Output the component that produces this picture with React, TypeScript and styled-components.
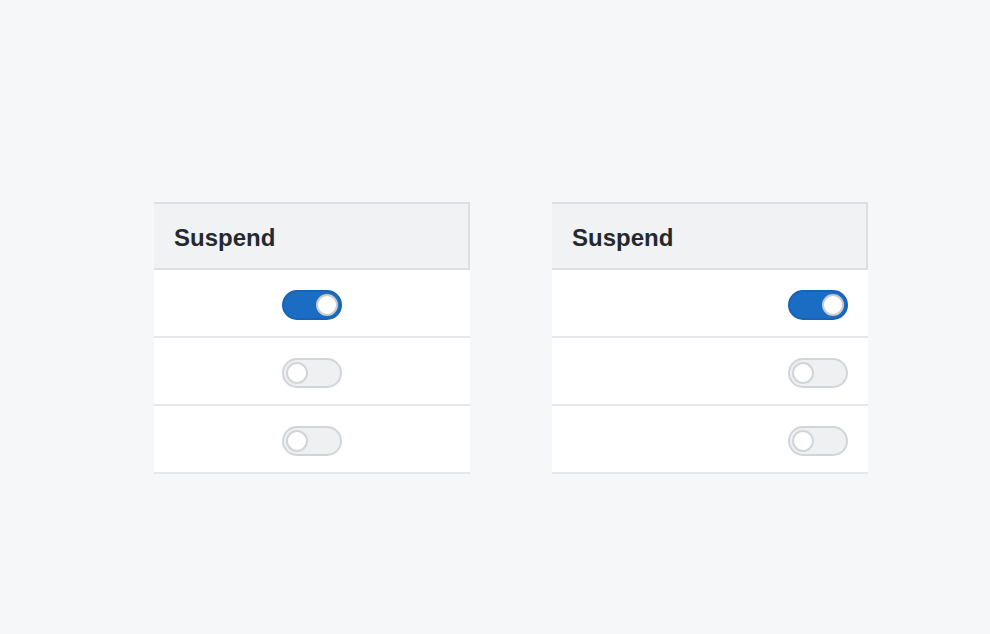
import React from 'react';
import styled, { createGlobalStyle } from 'styled-components';

const GlobalStyle = createGlobalStyle`
  html, body {
    margin: 0;
    padding: 0;
    background: #f6f7f9;
    font-family: 'Liberation Sans', Arial, sans-serif;
  }
`;

const Page = styled.div`
  width: 990px;
  height: 634px;
  box-sizing: border-box;
  padding: 202px 0 0 154px;
  display: flex;
  gap: 82px;
  align-items: flex-start;
`;

const Table = styled.div`
  width: 316px;
  display: flex;
  flex-direction: column;
`;

const Header = styled.div`
  height: 68px;
  box-sizing: border-box;
  background: #f1f2f4;
  border-top: 2px solid #dcdfe3;
  border-right: 2px solid #dcdfe3;
  border-bottom: 2px solid #dcdfe3;
  display: flex;
  align-items: center;
  padding: 4px 20px 0;
  font-size: 24px;
  font-weight: 700;
  color: #24292e;
`;

const Row = styled.div<{ $align: 'center' | 'right' }>`
  height: 68px;
  box-sizing: border-box;
  background: #ffffff;
  border-bottom: 2px solid #e5e7ea;
  display: flex;
  align-items: center;
  justify-content: ${(p) => (p.$align === 'center' ? 'center' : 'flex-end')};
  padding: 3px 20px 0;
`;

const Track = styled.div<{ $on: boolean }>`
  width: 60px;
  height: 30px;
  box-sizing: border-box;
  border-radius: 15px;
  background: ${(p) => (p.$on ? '#1a6dc2' : '#eff0f2')};
  border: 2px solid ${(p) => (p.$on ? '#1863b4' : '#d1d5da')};
  display: flex;
  align-items: center;
  justify-content: ${(p) => (p.$on ? 'flex-end' : 'flex-start')};
  padding: 0 2px;
`;

const Knob = styled.div<{ $on: boolean }>`
  width: 22px;
  height: 22px;
  box-sizing: border-box;
  border-radius: 50%;
  background: #ffffff;
  border: 2px solid ${(p) => (p.$on ? '#c9cdd2' : '#d1d5da')};
`;

const Toggle = ({ on }: { on: boolean }) => (
  <Track $on={on}>
    <Knob $on={on} />
  </Track>
);

const SuspendTable = ({ align }: { align: 'center' | 'right' }) => (
  <Table>
    <Header>Suspend</Header>
    {[true, false, false].map((on, i) => (
      <Row key={i} $align={align}>
        <Toggle on={on} />
      </Row>
    ))}
  </Table>
);

export default function App() {
  return (
    <>
      <GlobalStyle />
      <Page>
        <SuspendTable align="center" />
        <SuspendTable align="right" />
      </Page>
    </>
  );
}
